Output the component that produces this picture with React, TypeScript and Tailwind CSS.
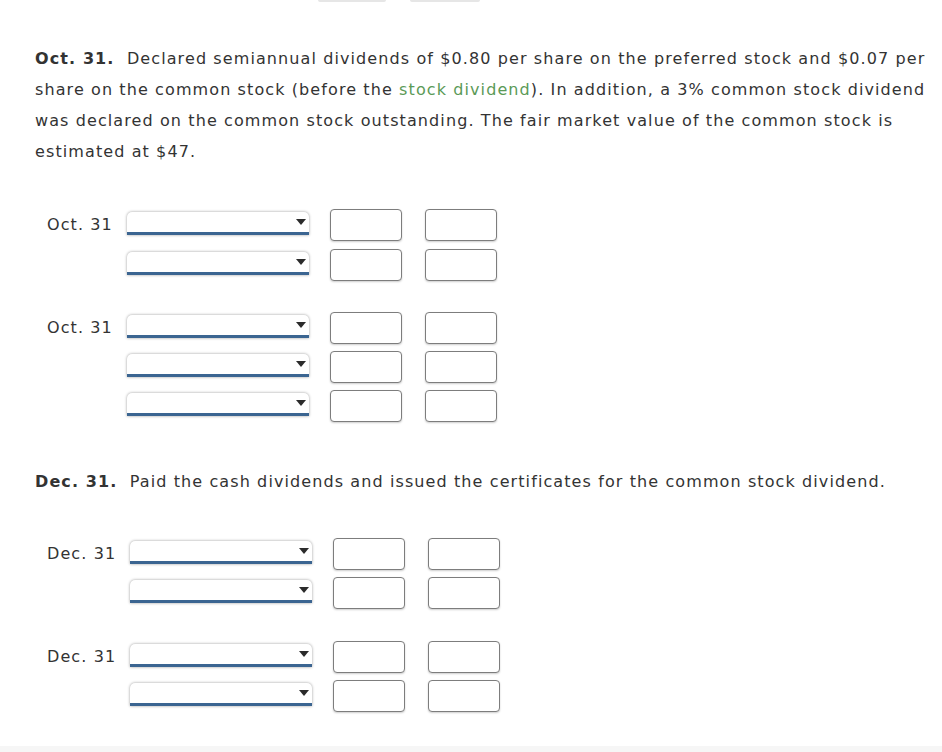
import React from 'react';

const font = { fontFamily: '"DejaVu Sans", Verdana, sans-serif' };

function Dropdown() {
  return (
    <div className="relative w-[182px] h-[23px] bg-white rounded-t-[5px] border-b-[3px] border-[#3b6591] shadow-[0_0_3px_rgba(0,0,0,0.4)]">
      <span className="absolute right-[3px] top-[7px] w-0 h-0 border-l-[5px] border-r-[5px] border-t-[6px] border-l-transparent border-r-transparent border-t-[#2b2b2b]" />
    </div>
  );
}

function AmountBox() {
  return <div className="w-[72px] h-[32px] bg-white border border-[#7d7d7d] rounded-[4px] shadow-[0_1px_2px_rgba(0,0,0,0.2)]" />;
}

function EntryBlock({ label, rows, gap }: { label: string; rows: number; gap: string }) {
  return (
    <div className="flex pl-[47px]">
      <div className="h-[32px] flex items-center pr-[14px] text-[16px] tracking-[1.1px] text-[#333]">{label}</div>
      <div className={`flex flex-col ${gap}`}>
        {Array.from({ length: rows }).map((_, i) => (
          <div key={i} className="flex items-center h-[32px]">
            <div className="-mt-[3px]">
              <Dropdown />
            </div>
            <div className="ml-[21px]">
              <AmountBox />
            </div>
            <div className="ml-[23px]">
              <AmountBox />
            </div>
          </div>
        ))}
      </div>
    </div>
  );
}

export default function App() {
  return (
    <div className="w-[942px] h-[752px] bg-white flex flex-col overflow-hidden" style={font}>
      {/* cut-off buttons at top */}
      <div className="flex h-[2px]">
        <div className="ml-[318px] w-[68px] h-[2px] rounded-b-[3px] bg-[#e6e6e6]" />
        <div className="ml-[24px] w-[70px] h-[2px] rounded-b-[3px] bg-[#e6e6e6]" />
      </div>

      <p className="mt-[41px] ml-[35px] w-[905px] whitespace-nowrap text-[16px] tracking-[1.1px] leading-[31px] text-[#333]">
        <b>Oct. 31.</b>&nbsp; Declared semiannual dividends of $0.80 per share on the preferred stock and $0.07 per
        <br />
        share on the common stock (before the <span className="text-[#5b9a57]">stock dividend</span>). In addition, a 3%
        common stock dividend
        <br />
        was declared on the common stock outstanding. The fair market value of the common stock is
        <br />
        estimated at $47.
      </p>

      <div className="mt-[42px]">
        <EntryBlock label="Oct. 31" rows={2} gap="gap-[8px]" />
      </div>
      <div className="mt-[31px]">
        <EntryBlock label="Oct. 31" rows={3} gap="gap-[7px]" />
      </div>

      <p className="mt-[44px] ml-[35px] text-[16px] tracking-[1.1px] leading-[31px] text-[#333]">
        <b>Dec. 31.</b>&nbsp; Paid the cash dividends and issued the certificates for the common stock dividend.
      </p>

      <div className="mt-[41px]">
        <EntryBlock label="Dec. 31" rows={2} gap="gap-[7px]" />
      </div>
      <div className="mt-[32px]">
        <EntryBlock label="Dec. 31" rows={2} gap="gap-[7px]" />
      </div>

      <div className="mt-auto h-[6px] bg-[#f6f6f6]" />
    </div>
  );
}
